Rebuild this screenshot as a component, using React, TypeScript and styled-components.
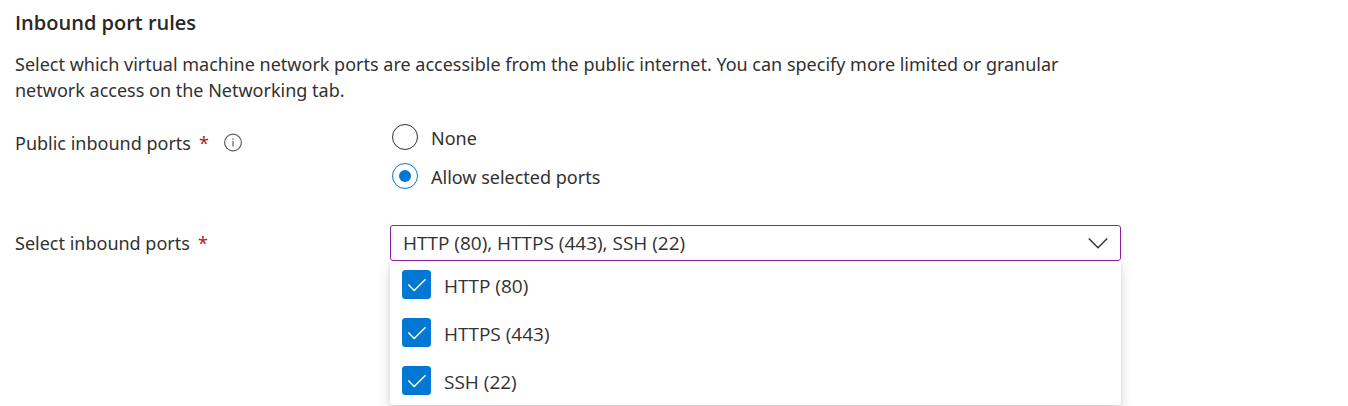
import React, { useState } from "react";
import styled, { createGlobalStyle } from "styled-components";

const GlobalStyle = createGlobalStyle`
  *, *::before, *::after { box-sizing: border-box; }
  body {
    margin: 0;
    background: #ffffff;
    color: #323130;
    font-family: "Segoe UI", "Noto Sans", sans-serif;
    font-size: 18px;
    line-height: 26px;
  }
`;

const Section = styled.section`
  max-width: 1136px;
  padding: 9px 15px 1px;
`;

const Heading = styled.h2`
  margin: 0;
  font-family: "Segoe UI", "Open Sans", sans-serif;
  font-size: 20px;
  line-height: 28px;
  font-weight: 600;
  color: #292827;
`;

const Description = styled.p`
  margin: 14px 0 0;
`;

const Field = styled.div`
  display: grid;
  grid-template-columns: 375px minmax(0, 1fr);
`;

const RadioField = styled(Field)`
  margin: 20px 0 0;
`;

const SelectField = styled(Field)`
  margin: 34px 0 0;
`;

const FieldLabel = styled.div<{ $height: number }>`
  display: flex;
  align-items: center;
  height: ${(p) => p.$height}px;
`;

const Required = styled.span`
  margin-left: 8px;
  color: #a4262c;
`;

const InfoButton = styled.button`
  display: flex;
  margin: 0 0 0 14px;
  padding: 0;
  border: 0;
  background: none;
  color: #605e5c;
`;

const RadioList = styled.div`
  display: flex;
  flex-direction: column;
  gap: 11px;
  padding: 1px 2px 0;
`;

const RadioOption = styled.label`
  display: flex;
  align-items: flex-start;
  gap: 13px;
  line-height: 28px;
`;

const Radio = styled.input`
  appearance: none;
  display: grid;
  place-items: center;
  width: 26px;
  height: 26px;
  margin: 0;
  border: 1px solid #323130;
  border-radius: 50%;

  &:checked {
    border-color: #0078d4;
  }

  &:checked::before {
    content: "";
    width: 12px;
    height: 12px;
    border-radius: 50%;
    background: #0078d4;
  }
`;

const Dropdown = styled.div`
  display: flex;
  flex-direction: column;
  font-family: "Segoe UI", "Open Sans", sans-serif;
  font-size: 19px;
`;

const DropdownButton = styled.button`
  display: flex;
  align-items: center;
  justify-content: space-between;
  width: 100%;
  height: 36px;
  padding: 0 12px;
  border: 1px solid #8b22a5;
  border-radius: 3px;
  background: #ffffff;
  color: inherit;
  font: inherit;
  text-align: left;
`;

const Menu = styled.div`
  border-radius: 0 0 3px 3px;
  background: #ffffff;
  box-shadow: 0 6px 14px rgba(0, 0, 0, 0.13), 0 1px 4px rgba(0, 0, 0, 0.11);
  clip-path: inset(0 -30px -30px -30px);
`;

const MenuOption = styled.label`
  display: flex;
  align-items: flex-start;
  gap: 13px;
  height: 48px;
  padding: 9px 12px 0;
  line-height: 32px;
`;

const CheckCell = styled.span`
  display: grid;
  width: 29px;
  height: 29px;

  & > * {
    grid-area: 1 / 1;
  }
`;

const Checkbox = styled.input`
  appearance: none;
  width: 29px;
  height: 29px;
  margin: 0;
  border: 1px solid #323130;
  border-radius: 3px;

  &:checked {
    border-color: #0078d4;
    background: #0078d4;
  }
`;

const CheckMark = styled.svg`
  pointer-events: none;
`;

const ports = ["HTTP (80)", "HTTPS (443)", "SSH (22)"];

export default function App() {
  const [access, setAccess] = useState("selected");
  const [open, setOpen] = useState(true);
  const [selected, setSelected] = useState(ports);

  const toggle = (port: string) =>
    setSelected(ports.filter((p) => (p === port ? !selected.includes(p) : selected.includes(p))));

  return (
    <>
      <GlobalStyle />
      <Section>
        <Heading>Inbound port rules</Heading>
        <Description>
          Select which virtual machine network ports are accessible from the public internet. You can specify more
          limited or granular network access on the Networking tab.
        </Description>

        <RadioField role="radiogroup" aria-labelledby="public-ports">
          <FieldLabel $height={40}>
            <span id="public-ports">Public inbound ports</span>
            <Required>*</Required>
            <InfoButton type="button" aria-label="About public inbound ports">
              <svg width="20" height="20" viewBox="0 0 20 20" fill="none" stroke="currentColor">
                <circle cx="10" cy="9.5" r="8.4" strokeWidth="1.2" />
                <path d="M10 8V13.5M10 5.3V6.7" strokeWidth="1.2" />
              </svg>
            </InfoButton>
          </FieldLabel>
          <RadioList>
            <RadioOption>
              <Radio type="radio" name="access" checked={access === "none"} onChange={() => setAccess("none")} />
              None
            </RadioOption>
            <RadioOption>
              <Radio
                type="radio"
                name="access"
                checked={access === "selected"}
                onChange={() => setAccess("selected")}
              />
              Allow selected ports
            </RadioOption>
          </RadioList>
        </RadioField>

        <SelectField>
          <FieldLabel $height={36}>
            <label id="select-ports" htmlFor="ports-button">Select inbound ports</label>
            <Required>*</Required>
          </FieldLabel>
          <Dropdown>
            <DropdownButton
              id="ports-button"
              type="button"
              aria-expanded={open}
              aria-controls="ports-menu"
              onClick={() => setOpen(!open)}
            >
              <span>{selected.join(", ")}</span>
              <svg width="20" height="20" viewBox="0 0 20 20" fill="none" stroke="#323130" strokeWidth="1.4">
                <path d="M0.8 5.5L10 14.7L19.2 5.5" />
              </svg>
            </DropdownButton>
            {open && (
              <Menu id="ports-menu" role="group" aria-labelledby="select-ports">
                {ports.map((port) => (
                  <MenuOption key={port}>
                    <CheckCell>
                      <Checkbox type="checkbox" checked={selected.includes(port)} onChange={() => toggle(port)} />
                      <CheckMark width="29" height="29" viewBox="0 0 29 29" fill="none" stroke="#ffffff" strokeWidth="1.4">
                        <path d="M6.3 14.5L12.2 20.5L23.5 9.2" />
                      </CheckMark>
                    </CheckCell>
                    {port}
                  </MenuOption>
                ))}
              </Menu>
            )}
          </Dropdown>
        </SelectField>
      </Section>
    </>
  );
}
